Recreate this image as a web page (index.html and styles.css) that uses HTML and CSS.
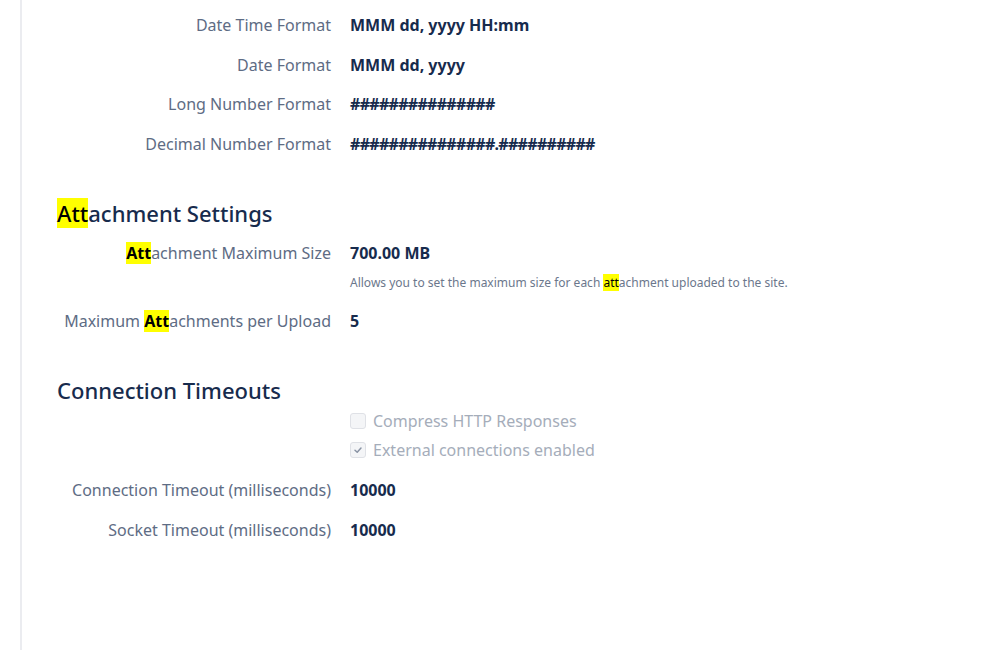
FILE: index.html
```html
<!DOCTYPE html>
<html lang="en">
<head>
    <meta charset="UTF-8">
    <title>General Configuration</title>
    <link rel="stylesheet" href="styles.css">
</head>
<body>
    <div class="page">
        <div class="group">
            <div class="row"><span class="label">Date Time Format</span><span class="value">MMM dd, yyyy HH:mm</span></div>
            <div class="row"><span class="label">Date Format</span><span class="value">MMM dd, yyyy</span></div>
            <div class="row"><span class="label">Long Number Format</span><span class="value hash">###############</span></div>
            <div class="row"><span class="label">Decimal Number Format</span><span class="value hash">###############.##########</span></div>
        </div>

        <h2 class="section-title"><mark>Att</mark>achment Settings</h2>
        <div class="group">
            <div class="row">
                <span class="label"><mark>Att</mark>achment Maximum Size</span>
                <div>
                    <span class="value">700.00 MB</span>
                    <p class="desc">Allows you to set the maximum size for each <mark>att</mark>achment uploaded to the site.</p>
                </div>
            </div>
            <div class="row"><span class="label">Maximum <mark>Att</mark>achments per Upload</span><span class="value">5</span></div>
        </div>

        <h2 class="section-title tight">Connection Timeouts</h2>
        <div class="checks">
            <label class="check"><span class="box"></span>Compress HTTP Responses</label>
            <label class="check"><span class="box"><svg width="10" height="10" viewBox="0 0 10 10"><path d="M2 5.2 L4.2 7.2 L8 3" fill="none" stroke="#8993a4" stroke-width="1.5" stroke-linecap="round" stroke-linejoin="round"/></svg></span>External connections enabled</label>
        </div>
        <div class="group">
            <div class="row"><span class="label">Connection Timeout (milliseconds)</span><span class="value">10000</span></div>
            <div class="row"><span class="label">Socket Timeout (milliseconds)</span><span class="value">10000</span></div>
        </div>
    </div>
</body>
</html>
```

FILE: styles.css
```css
body {
    margin: 0;
    font-family: "Noto Sans", "Open Sans", sans-serif;
    font-size: 16px;
    color: #172b4d;
    background: #fff;
}
.page {
    margin-left: 20px;
    border-left: 2px solid #ebecf0;
    padding: 15px 0 0 35px;
    min-height: 635px;
}
.group {
    display: flex;
    flex-direction: column;
    gap: 19.5px;
}
.row {
    display: grid;
    grid-template-columns: 274px 1fr;
    column-gap: 19px;
    line-height: 20px;
}
.label {
    text-align: right;
    color: #5e6c84;
}
.value {
    font-weight: 700;
    color: #172b4d;
}
.hash {
    letter-spacing: -0.7px;
}
.desc {
    margin: 12px 0 1px 0;
    font-size: 12px;
    line-height: 16px;
    color: #6b778c;
}
mark {
    background: #ffff00;
    color: #000;
}
.label mark {
    font-weight: 700;
}
.section-title {
    margin: 46px 0 17px 0;
    font-size: 22px;
    line-height: 26px;
    font-weight: 500;
    color: #172b4d;
}
.section-title.tight {
    margin-bottom: 8px;
}
.checks {
    display: flex;
    flex-direction: column;
    gap: 9px;
    margin: 0 0 20px 293px;
}
.check {
    display: flex;
    align-items: center;
    gap: 7px;
    line-height: 20px;
    color: #a5adba;
}
.box {
    width: 14px;
    height: 14px;
    border: 1px solid #dfe1e6;
    border-radius: 3px;
    background: #f4f5f7;
    display: flex;
    align-items: center;
    justify-content: center;
}
```
